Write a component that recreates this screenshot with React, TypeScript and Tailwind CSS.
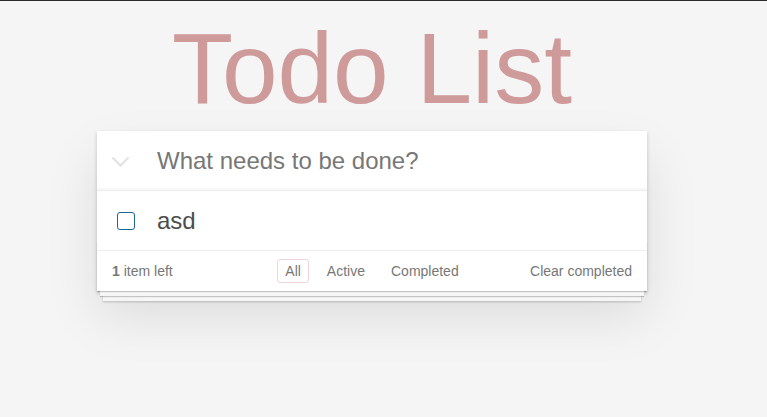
import React from 'react';

const font = { fontFamily: '"Liberation Sans", Arial, Helvetica, sans-serif' };

function Chevron() {
  return (
    <svg width="19" height="11" viewBox="0 0 19 11" className="block">
      <polyline points="1.5,1.5 9.5,9.5 17.5,1.5" fill="none" stroke="#e3e3e3" strokeWidth="2.4" />
    </svg>
  );
}

export default function App() {
  return (
    <div className="min-h-[417px] bg-[#f5f5f5] border-t border-[#2b2b2b]" style={font}>
      <div className="w-[744px] flex flex-col items-center">
        <h1 className="pt-[17px] text-[100px] leading-[100px] font-thin text-[#cf9a9a] whitespace-nowrap">
          Todo List
        </h1>

        <section className="relative mt-[13px] w-[550px] bg-white shadow-[0_2px_4px_0_rgba(0,0,0,0.2),0_25px_50px_0_rgba(0,0,0,0.1)]">
          {/* new todo */}
          <header className="flex items-center h-[59px] shadow-[inset_0_-2px_1px_rgba(0,0,0,0.03)]">
            <div className="w-[60px] pl-[14px] pt-[2px]">
              <Chevron />
            </div>
            <span className="text-[24px] leading-[1.4] text-[#777]">What needs to be done?</span>
          </header>

          {/* list */}
          <ul className="border-t border-[#ededed]">
            <li className="flex items-center h-[60px] border-b border-[#ededed]">
              <div className="w-[60px] pl-[20px]">
                <div className="w-[18px] h-[18px] rounded-[3px] border-[1.5px] border-[#1c6594] bg-white" />
              </div>
              <span className="text-[24px] leading-[1.4] text-[#4d4d4d]">asd</span>
            </li>
          </ul>

          {/* footer */}
          <footer className="relative grid grid-cols-[1fr_auto_1fr] items-center h-[40px] px-[15px] text-[14px] text-[#777]">
            <div className="pointer-events-none absolute left-0 right-0 bottom-0 h-[50px] overflow-hidden shadow-[0_1px_1px_rgba(0,0,0,0.2),0_8px_0_-3px_#f6f6f6,0_9px_1px_-3px_rgba(0,0,0,0.2),0_16px_0_-6px_#f6f6f6,0_17px_2px_-6px_rgba(0,0,0,0.2)]" />
            <span className="relative">
              <strong className="font-bold">1</strong> item left
            </span>
            <ul className="relative flex items-center gap-[10px]">
              <li className="h-[24px] px-[7px] flex items-center rounded-[3px] border border-[#efd5d5]">All</li>
              <li className="h-[24px] px-[7px] flex items-center rounded-[3px] border border-transparent">Active</li>
              <li className="h-[24px] px-[7px] flex items-center rounded-[3px] border border-transparent">Completed</li>
            </ul>
            <span className="relative justify-self-end">Clear completed</span>
          </footer>
        </section>
      </div>
    </div>
  );
}
